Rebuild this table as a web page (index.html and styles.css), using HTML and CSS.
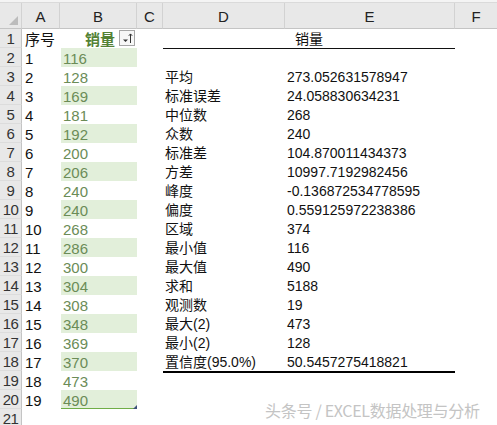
FILE: index.html
```html
<!DOCTYPE html>
<html lang="zh">
<head>
<meta charset="utf-8">
<link rel="stylesheet" href="styles.css">
</head>
<body>
<div class="page">
  <div class="topbar"></div>
  <div class="sheet">
    <div class="ch corner"><span class="tri"></span></div>
    <div class="ch">A</div>
    <div class="ch">B</div>
    <div class="ch">C</div>
    <div class="ch">D</div>
    <div class="ch">E</div>
    <div class="ch last">F</div>

    <div class="rh">1</div><div class="a">序号</div>
    <div class="b head">销量<span class="filter"><svg width="14" height="14" viewBox="0 0 14 14"><path d="M3 8.5h5l-2.5 2.5z" fill="#333"/><path d="M10.5 12V3M8.8 4.8l1.7-1.9 1.7 1.9" stroke="#333" stroke-width="1" fill="none"/></svg></span></div>
    <div class="de title">销量</div>

    <div class="rh">2</div><div class="a">1</div><div class="b fill">116</div>
    <div class="rh">3</div><div class="a">2</div><div class="b">128</div><div class="d">平均</div><div class="e">273.052631578947</div>
    <div class="rh">4</div><div class="a">3</div><div class="b fill">169</div><div class="d">标准误差</div><div class="e">24.058830634231</div>
    <div class="rh">5</div><div class="a">4</div><div class="b">181</div><div class="d">中位数</div><div class="e">268</div>
    <div class="rh">6</div><div class="a">5</div><div class="b fill">192</div><div class="d">众数</div><div class="e">240</div>
    <div class="rh">7</div><div class="a">6</div><div class="b">200</div><div class="d">标准差</div><div class="e">104.870011434373</div>
    <div class="rh">8</div><div class="a">7</div><div class="b fill">206</div><div class="d">方差</div><div class="e">10997.7192982456</div>
    <div class="rh">9</div><div class="a">8</div><div class="b">240</div><div class="d">峰度</div><div class="e">-0.136872534778595</div>
    <div class="rh">10</div><div class="a">9</div><div class="b fill">240</div><div class="d">偏度</div><div class="e">0.559125972238386</div>
    <div class="rh">11</div><div class="a">10</div><div class="b">268</div><div class="d">区域</div><div class="e">374</div>
    <div class="rh">12</div><div class="a">11</div><div class="b fill">286</div><div class="d">最小值</div><div class="e">116</div>
    <div class="rh">13</div><div class="a">12</div><div class="b">300</div><div class="d">最大值</div><div class="e">490</div>
    <div class="rh">14</div><div class="a">13</div><div class="b fill">304</div><div class="d">求和</div><div class="e">5188</div>
    <div class="rh">15</div><div class="a">14</div><div class="b">308</div><div class="d">观测数</div><div class="e">19</div>
    <div class="rh">16</div><div class="a">15</div><div class="b fill">348</div><div class="d">最大(2)</div><div class="e">473</div>
    <div class="rh">17</div><div class="a">16</div><div class="b">369</div><div class="d">最小(2)</div><div class="e">128</div>
    <div class="rh">18</div><div class="a">17</div><div class="b fill">370</div><div class="d endrow">置信度(95.0%)</div><div class="e endrow">50.5457275418821</div>
    <div class="rh">19</div><div class="a">18</div><div class="b">473</div>
    <div class="rh">20</div><div class="a">19</div><div class="b fill lastrow">490<span class="handle"></span></div>
    <div class="rh">21</div>
  </div>
  <div class="watermark">头条号 / EXCEL数据处理与分析</div>
</div>
</body>
</html>
```
FILE: styles.css
```css
* { box-sizing: border-box; }
html, body { margin: 0; padding: 0; background: #fff; }
body { width: 497px; height: 425px; overflow: hidden; }
.page {
  position: relative;
  width: 497px;
  height: 425px;
  overflow: hidden;
  font-family: "Liberation Sans", "Noto Sans CJK SC", sans-serif;
  font-size: 14px;
  color: #111;
}
.topbar {
  height: 3px;
  background: #f4f4f4;
  border-bottom: 1px solid #dadada;
}
.sheet {
  display: grid;
  grid-template-columns: 22px 38px 77px 26px 122px 170px 42px;
  grid-template-rows: 26px;
  grid-auto-rows: 19px;
}
.ch {
  background: #e8e8e8;
  border-right: 1px solid #d2d2d2;
  border-bottom: 1px solid #c4c4c4;
  display: flex;
  align-items: center;
  justify-content: center;
  color: #222;
  font-size: 15px;
  padding-top: 1px;
}
.ch.last { border-right: none; }
.corner { position: relative; }
.tri {
  position: absolute;
  right: 3px;
  bottom: 3px;
  width: 0;
  height: 0;
  border-left: 9px solid transparent;
  border-bottom: 9px solid #bcbcbc;
}
.rh {
  grid-column: 1;
  background: #e8e8e8;
  border-right: 1px solid #c4c4c4;
  border-bottom: 1px solid #dcdcdc;
  text-align: center;
  line-height: 19px;
  color: #333;
  font-size: 15px;
  letter-spacing: -0.5px;
}
.a, .b, .d, .e, .de {
  line-height: 19px;
  padding-top: 1px;
  white-space: nowrap;
}
.a { grid-column: 2; padding-left: 3px; font-size: 15px; }
.b { grid-column: 3; padding-left: 3px; color: #6b8c57; font-size: 15px; position: relative; }
.b.fill { background: #e2efda; margin-left: 1px; padding-left: 2px; }
.b.head {
  color: #548235;
  font-weight: bold;
  text-align: center;
  padding-right: 0;
}
.filter {
  position: absolute;
  right: 2px;
  top: 1px;
  width: 16px;
  height: 16px;
  border: 1px solid #a6a6a6;
  background: #f7f7f7;
  display: flex;
  align-items: center;
  justify-content: center;
}
.filter svg { display: block; }
.lastrow { box-shadow: inset 0 -1px 0 #70ad47; }
.handle {
  position: absolute;
  right: 0;
  bottom: 0;
  width: 0;
  height: 0;
  border-left: 4px solid transparent;
  border-bottom: 4px solid #3c4f7a;
}
.de.title {
  grid-column: 5 / span 2;
  text-align: center;
  box-shadow: 0 1px 0 #111;
}
.d { grid-column: 5; padding-left: 2px; }
.e { grid-column: 6; padding-left: 2px; }
.endrow { box-shadow: 0 2px 0 #000; }
.watermark {
  position: absolute;
  left: 265px;
  top: 400px;
  font-family: "Noto Sans CJK SC", "Liberation Sans", sans-serif;
  font-size: 16px;
  line-height: 20px;
  color: #c4c4c4;
  letter-spacing: -0.3px;
  white-space: nowrap;
}
```
